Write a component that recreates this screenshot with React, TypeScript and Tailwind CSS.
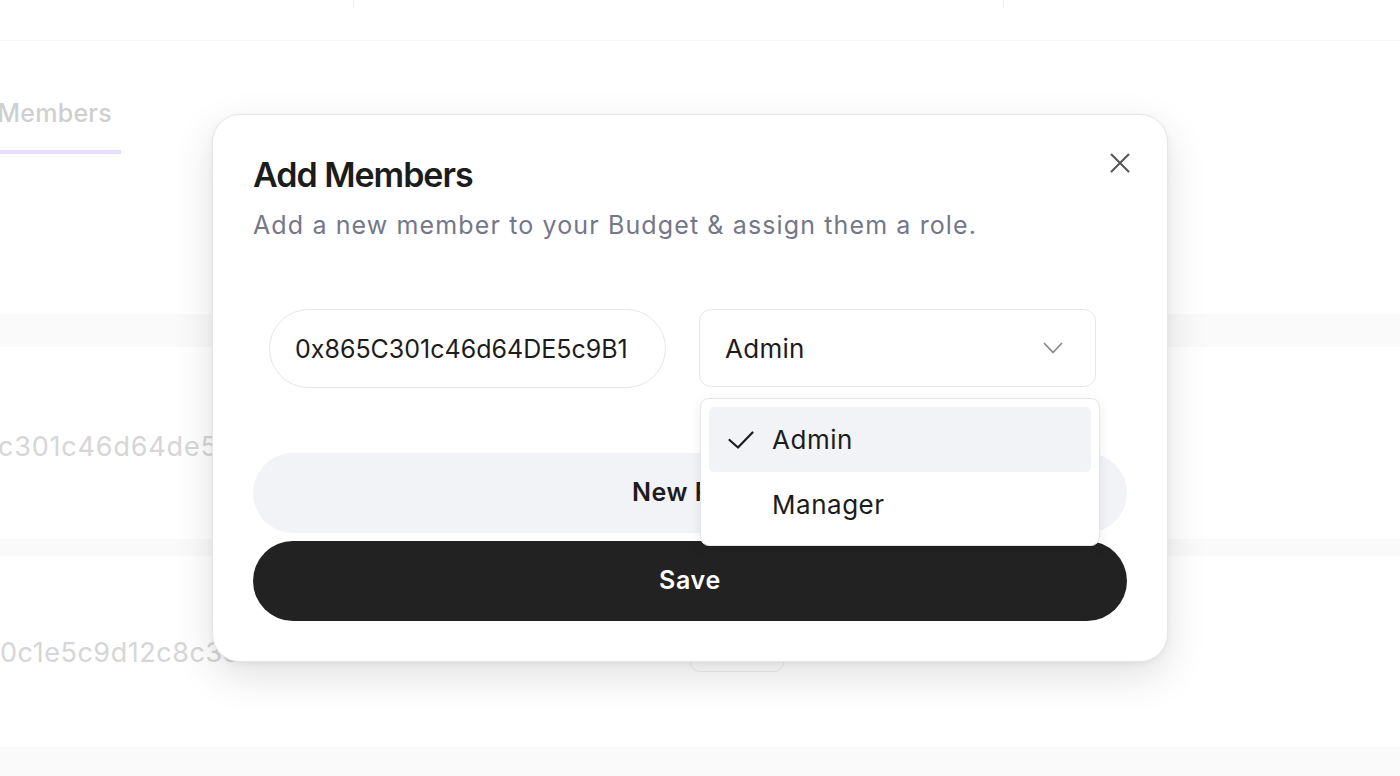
import { useState } from "react";

const roles = ["Admin", "Manager"];

export default function App() {
    const [role, setRole] = useState("Admin");
    const [address, setAddress] = useState("0x865C301c46d64DE5c9B1");

    return (
        <div className="relative h-[776px] w-full overflow-hidden bg-white font-['Inter','Liberation_Sans',sans-serif]">
            {/* Page behind the dialog */}
            <header className="flex h-[41px] border-b border-[#f4f4f4]">
                <div className="h-2 w-[354px] border-r border-[#f0f0f0]" />
                <div className="h-2 w-[650px] border-r border-[#f0f0f0]" />
            </header>

            <div className="mt-[58px] flex">
                <button className="flex w-[121px] justify-end whitespace-nowrap border-b-4 border-[#e7defb] pb-[23px] pr-[9px] text-[25px] font-medium leading-[28px] tracking-[0.01em] text-[#cfcfcf]">
                    Members
                </button>
            </div>

            <div className="mt-[160px]">
                <div className="h-[33px] bg-[#fafafa]" />
                <div className="flex h-[192px] items-center pt-2">
                    <span className="-ml-[2px] w-[214px] overflow-hidden whitespace-nowrap text-[27px] tracking-[0.03em] text-[#d6d6d6]">
                        c301c46d64de5c9b1a7d3f2e8b4c
                    </span>
                </div>
                <div className="h-[17px] bg-[#fafafa]" />
                <div className="flex h-[191px] items-center">
                    <span className="w-[690px] whitespace-nowrap pt-1 text-[27px] tracking-[0.02em] text-[#d6d6d6]">
                        0c1e5c9d12c8c3e2b5b7af4dd1f4b0e
                    </span>
                    <span className="mt-[6px] flex h-[34px] items-center rounded-[10px] border border-[#ededed] px-4 text-[20px] text-[#d6d6d6]">
                        Admin
                    </span>
                </div>
                <div className="h-[40px] bg-[#fafafa]" />
            </div>

            {/* Dialog */}
            <div className="absolute left-[212px] top-[114px] h-[548px] w-[956px] rounded-[28px] border border-[#e6e6ea] bg-white px-10 pt-10 shadow-[0_14px_40px_rgba(0,0,0,0.12),0_2px_6px_rgba(0,0,0,0.05)]">
                <button className="absolute right-[37px] top-[38px] text-[#555]">
                    <svg width="20" height="20" viewBox="0 0 20 20" fill="none" stroke="currentColor" strokeWidth="2" strokeLinecap="round">
                        <path d="M1.5 1.5l17 17M18.5 1.5l-17 17" />
                    </svg>
                </button>

                <h2 className="text-[34px] font-semibold leading-[40px] tracking-[-0.03em] text-[#1c1c1c]">Add Members</h2>
                <p className="mt-[14px] text-[25px] leading-[32px] tracking-[0.045em] text-[#737789]">
                    Add a new member to your Budget &amp; assign them a role.
                </p>

                <div className="mt-[68px] ml-4 flex gap-[33px]">
                    <input
                        value={address}
                        onChange={(e) => setAddress(e.target.value)}
                        className="h-[79px] w-[397px] rounded-full border border-[#e4e6ec] px-[25px] text-[25px] text-[#1c1c1c] outline-none"
                    />
                    <div className="relative">
                        <button className="flex h-[78px] w-[397px] items-center justify-between rounded-[12px] border border-[#e4e6ec] pl-[25px] pr-[32px] text-[26px] tracking-[0.01em] text-[#1c1c1c]">
                            {role}
                            <svg width="20" height="12" viewBox="0 0 20 12" fill="none" stroke="#8a8a8a" strokeWidth="1.8" strokeLinecap="round" strokeLinejoin="round">
                                <path d="M1.5 1.5l8.5 9 8.5-9" />
                            </svg>
                        </button>

                        <div className="absolute left-[1px] top-full z-10 mt-[10px] w-[400px] rounded-[9px] border border-[#e4e6ec] bg-white p-2 shadow-[0_4px_12px_rgba(0,0,0,0.08)]">
                            {roles.map((r) => (
                                <button
                                    key={r}
                                    onClick={() => setRole(r)}
                                    className={`relative flex h-[65px] w-full items-center rounded-[5px] pl-[63px] text-[26px] tracking-[0.02em] text-[#1c1c1c] ${r === role ? "bg-[#f2f3f7]" : ""}`}
                                >
                                    {r === role && (
                                        <svg className="absolute left-[19px] top-[24px]" width="26" height="18" viewBox="0 0 26 18" fill="none" stroke="#1c1c1c" strokeWidth="2.2" strokeLinecap="round" strokeLinejoin="round">
                                            <path d="M1.5 9l8.5 7.5L24.5 1.5" />
                                        </svg>
                                    )}
                                    {r}
                                </button>
                            ))}
                        </div>
                    </div>
                </div>

                <button className="mt-[65px] flex h-[80px] w-full items-center justify-center rounded-full bg-[#f2f3f7] text-[25px] font-semibold tracking-[0.02em] text-[#1c1c1c]">
                    New Row
                </button>
                <button className="mt-2 flex h-[80px] w-full items-center justify-center rounded-full bg-[#222222] text-[25px] font-semibold tracking-[0.03em] text-white">
                    Save
                </button>
            </div>
        </div>
    );
}
